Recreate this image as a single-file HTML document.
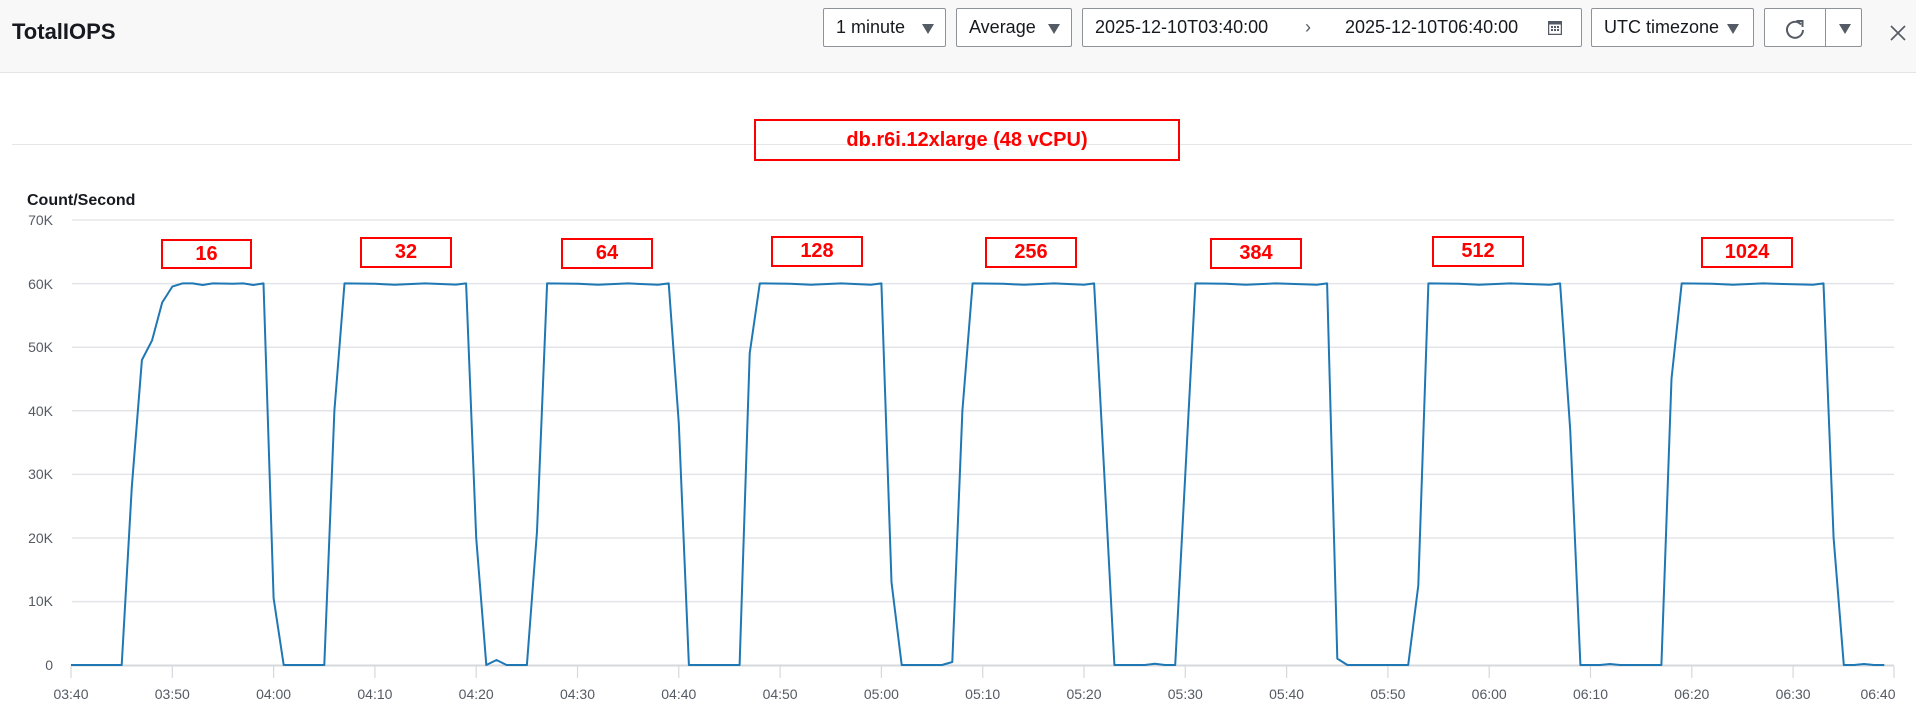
<!DOCTYPE html>
<html><head><meta charset="utf-8"><style>
*{box-sizing:border-box;margin:0;padding:0}
body{width:1916px;height:717px;background:#fff;font-family:"Liberation Sans",Arial,sans-serif;position:relative;overflow:hidden;color:#16191f}
.hdr{position:absolute;left:0;top:0;width:1916px;height:73px;background:#f8f8f8;border-bottom:1px solid #e4e4e4}
.title{position:absolute;left:12px;top:19px;font-size:22px;font-weight:bold}
.box{position:absolute;top:8px;height:39px;border:1px solid #8d9399;border-radius:2px;background:#fff;font-size:18px;line-height:37px;padding-left:12px;color:#16191f}
.car{position:absolute;top:15px;width:0;height:0;border-left:6px solid transparent;border-right:6px solid transparent;border-top:10px solid #545b64}
.rb{position:absolute;border:2px solid #f00;color:#f00;font-weight:bold;font-size:20px;text-align:center}
</style></head><body>
<div class="hdr">
<div class="title">TotalIOPS</div>
<div class="box" style="left:823px;width:123px">1 minute<div class="car" style="left:98px"></div></div>
<div class="box" style="left:956px;width:116px">Average<div class="car" style="left:91px"></div></div>
<div class="box" style="left:1082px;width:500px">2025-12-10T03:40:00<span style="position:absolute;left:222px;top:0;font-size:18px;color:#545b64">&#x203A;</span><span style="position:absolute;left:262px">2025-12-10T06:40:00</span>
<svg style="position:absolute;left:465px;top:12px" width="14" height="14" viewBox="0 0 14 14"><rect x="0.5" y="0.5" width="13" height="13" fill="none" stroke="#545b64" stroke-width="1.5"/><rect x="0.5" y="0.5" width="13" height="3" fill="#545b64"/><g fill="#545b64"><rect x="3" y="5" width="2" height="2"/><rect x="6" y="5" width="2" height="2"/><rect x="9" y="5" width="2" height="2"/><rect x="3" y="8" width="2" height="2"/><rect x="6" y="8" width="2" height="2"/><rect x="9" y="8" width="2" height="2"/></g></svg></div>
<div class="box" style="left:1591px;width:163px">UTC timezone<div class="car" style="left:135px"></div></div>
<div class="box" style="left:1764px;width:98px;padding:0">
<svg style="position:absolute;left:19px;top:9px" width="22" height="22" viewBox="0 0 22 22"><path d="M17 6.5 A8 8 0 1 0 19 12" fill="none" stroke="#545b64" stroke-width="2"/><path d="M12.5 3 L18.5 3 L18.5 9" fill="none" stroke="#545b64" stroke-width="2"/></svg>
<div style="position:absolute;left:60px;top:0;width:1px;height:37px;background:#8d9399"></div>
<div class="car" style="left:74px"></div></div>
<svg style="position:absolute;left:1890px;top:25px" width="16" height="16" viewBox="0 0 16 16"><path d="M1 1L15 15M15 1L1 15" stroke="#545b64" stroke-width="1.6"/></svg>
</div>
<div style="position:absolute;left:12px;top:144px;width:1900px;height:1px;background:#e4e6e8"></div>
<div class="rb" style="left:754px;top:119px;width:426px;height:42px;line-height:38px">db.r6i.12xlarge (48 vCPU)</div>
<div style="position:absolute;left:27px;top:192px;font-size:16px;font-weight:bold">Count/Second</div>
<svg style="position:absolute;left:0;top:0" width="1916" height="717">
<g stroke="#e3e5e8" stroke-width="1.5">
<line x1="72" x2="1894" y1="220" y2="220"/><line x1="72" x2="1894" y1="283.6" y2="283.6"/><line x1="72" x2="1894" y1="347.2" y2="347.2"/><line x1="72" x2="1894" y1="410.8" y2="410.8"/><line x1="72" x2="1894" y1="474.4" y2="474.4"/><line x1="72" x2="1894" y1="538" y2="538"/><line x1="72" x2="1894" y1="601.6" y2="601.6"/></g>
<line x1="71" x2="1894" y1="665.5" y2="665.5" stroke="#d5d8dc" stroke-width="2"/>
<g stroke="#d5d8dc" stroke-width="1.2">
<line x1="71" x2="71" y1="666" y2="678"/><line x1="172.3" x2="172.3" y1="666" y2="678"/><line x1="273.6" x2="273.6" y1="666" y2="678"/><line x1="374.9" x2="374.9" y1="666" y2="678"/><line x1="476.2" x2="476.2" y1="666" y2="678"/><line x1="577.5" x2="577.5" y1="666" y2="678"/><line x1="678.8" x2="678.8" y1="666" y2="678"/><line x1="780.1" x2="780.1" y1="666" y2="678"/><line x1="881.4" x2="881.4" y1="666" y2="678"/><line x1="982.7" x2="982.7" y1="666" y2="678"/><line x1="1084" x2="1084" y1="666" y2="678"/><line x1="1185.3" x2="1185.3" y1="666" y2="678"/><line x1="1286.6" x2="1286.6" y1="666" y2="678"/><line x1="1387.9" x2="1387.9" y1="666" y2="678"/><line x1="1489.2" x2="1489.2" y1="666" y2="678"/><line x1="1590.5" x2="1590.5" y1="666" y2="678"/><line x1="1691.8" x2="1691.8" y1="666" y2="678"/><line x1="1793.1" x2="1793.1" y1="666" y2="678"/><line x1="1894" x2="1894" y1="666" y2="678"/></g>
<g font-family="Liberation Sans,Arial,sans-serif" font-size="14" fill="#545b64" text-anchor="end">
<text x="53" y="225">70K</text><text x="53" y="289">60K</text><text x="53" y="352">50K</text><text x="53" y="416">40K</text><text x="53" y="479">30K</text><text x="53" y="543">20K</text><text x="53" y="606">10K</text><text x="53" y="670">0</text></g>
<g font-family="Liberation Sans,Arial,sans-serif" font-size="14" fill="#545b64" text-anchor="middle">
<text x="71" y="699">03:40</text><text x="172.3" y="699">03:50</text><text x="273.6" y="699">04:00</text><text x="374.9" y="699">04:10</text><text x="476.2" y="699">04:20</text><text x="577.5" y="699">04:30</text><text x="678.8" y="699">04:40</text><text x="780.1" y="699">04:50</text><text x="881.4" y="699">05:00</text><text x="982.7" y="699">05:10</text><text x="1084" y="699">05:20</text><text x="1185.3" y="699">05:30</text><text x="1286.6" y="699">05:40</text><text x="1387.9" y="699">05:50</text><text x="1489.2" y="699">06:00</text><text x="1590.5" y="699">06:10</text><text x="1691.8" y="699">06:20</text><text x="1793.1" y="699">06:30</text><text x="1878" y="699">06:40</text></g>
<polyline fill="none" stroke="#1f77b4" stroke-width="2" stroke-linejoin="round" points="71,665 121.7,665 131.8,487 141.9,360 152,340.6 162.2,302.5 172.3,286.6 182.4,283.4 192.6,283.4 202.7,285 212.8,283.4 233,283.8 243.2,283.4 253.3,285 263.5,283.4 273.6,598.2 283.7,665 324.3,665 334.4,410.6 344.5,283.4 375,283.8 395,284.8 425,283.4 456,284.6 466.1,283.4 476.2,537.8 486.3,665 496.5,660 506.6,665 526.9,665 537,531.4 547.1,283.4 578,283.8 598,284.8 628,283.4 658,284.8 668.7,283.4 678.8,423.3 688.9,665 739.6,665 749.7,353.4 759.8,283.4 790,283.8 811,284.8 841,283.4 871,284.8 881.4,283.4 891.5,582.3 901.7,665 942,665 952.3,662 962.4,410.6 972.6,283.4 1003,283.8 1024,284.8 1054,283.4 1084,284.8 1094.1,283.4 1104.3,474.2 1114.4,665 1144.8,665 1154.9,663.7 1165,665 1175.2,665 1185.3,474.2 1195.4,283.4 1226,283.8 1246,284.8 1276,283.4 1317,284.8 1327.1,283.4 1337.3,658.6 1347.4,665 1408.2,665 1418.3,585.5 1428.4,283.4 1459,283.8 1479,284.8 1510,283.4 1550,284.8 1560.1,283.4 1570.2,429.7 1580.4,665 1600,665 1610,664 1620,665 1661.4,665 1671.5,378.8 1681.7,283.4 1712,283.8 1733,284.8 1763,283.4 1813,284.8 1823.5,283.4 1833.6,537.8 1843.8,665 1854,665 1864,664 1874,665 1884.3,665"/>
</svg>
<div class="rb" style="left:161px;top:239px;width:91px;height:30px;line-height:26px">16</div>
<div class="rb" style="left:360px;top:237px;width:92px;height:31px;line-height:27px">32</div>
<div class="rb" style="left:561px;top:238px;width:92px;height:31px;line-height:27px">64</div>
<div class="rb" style="left:771px;top:236px;width:92px;height:31px;line-height:27px">128</div>
<div class="rb" style="left:985px;top:237px;width:92px;height:31px;line-height:27px">256</div>
<div class="rb" style="left:1210px;top:238px;width:92px;height:31px;line-height:27px">384</div>
<div class="rb" style="left:1432px;top:236px;width:92px;height:31px;line-height:27px">512</div>
<div class="rb" style="left:1701px;top:237px;width:92px;height:31px;line-height:27px">1024</div>
</body></html>
